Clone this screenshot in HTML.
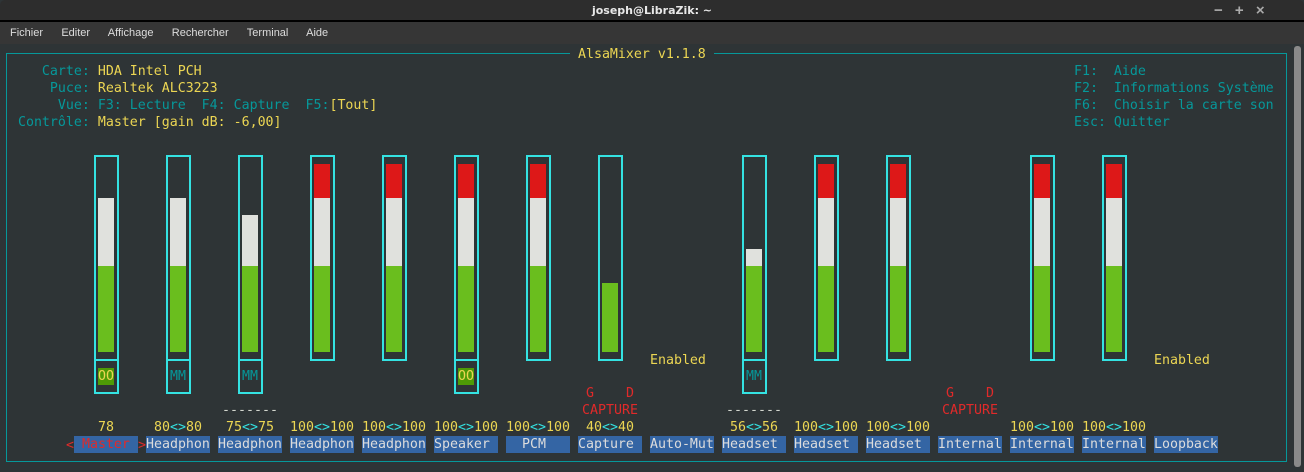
<!DOCTYPE html>
<html><head><meta charset="utf-8"><style>
*{margin:0;padding:0;box-sizing:border-box}
body{width:1304px;height:472px;overflow:hidden;background:#2e3436;position:relative;font-family:"DejaVu Sans Mono","Liberation Mono",monospace}
.t{position:absolute;white-space:pre;font-size:13.28px;line-height:17px;height:17px;margin-top:1px}
.c{color:#06989a}.y{color:#ecd653}.r{color:#e02a2a}.w{color:#d3d7cf}
.box{position:absolute;border:2px solid #34e2e2}
.f{position:absolute}
.lab{position:absolute;top:436px;height:17px;width:64px;background:#3465a4;color:#dcdcdc;font-size:13.28px;line-height:18px;white-space:pre;text-align:left}
.num{position:absolute;width:64px;text-align:center;font-size:13.28px;line-height:18px;white-space:pre;color:#ecd653}
</style></head><body>
<div style="position:absolute;left:0;top:0;width:1304px;height:20px;background:#2d2d2d;border-radius:5px 5px 0 0"></div>
<div style="position:absolute;left:0;top:20px;width:1304px;height:2px;background:#000"></div>
<div style="position:absolute;left:0;top:22px;width:1304px;height:22px;background:#363636"></div>
<div style="position:absolute;left:0;top:4px;width:1304px;text-align:center;color:#e8e8e8;font:bold 11px 'DejaVu Sans',sans-serif">joseph@LibraZik: ~</div>
<div style="position:absolute;right:0;top:2px;width:90px;color:#aaa;font:bold 15px 'Liberation Sans',sans-serif;word-spacing:8px">− + ×</div>
<div style="position:absolute;left:10px;top:27px;color:#ddd;font:11px 'Liberation Sans',sans-serif;white-space:pre">Fichier      Editer      Affichage      Rechercher      Terminal      Aide</div>
<div style="position:absolute;left:1294px;top:46px;width:7px;height:421px;background:#8a8a8a;border-radius:3px"></div>
<div style="position:absolute;left:6px;top:53px;width:1281px;height:409px;border:1px solid #06989a"></div>
<div class="t y" style="left:570px;top:45px;background:#2e3436"> AlsaMixer v1.1.8 </div>
<div class="t" style="left:2px;top:62px"><span class="c">     Carte: </span><span class="y">HDA Intel PCH</span></div>
<div class="t" style="left:2px;top:79px"><span class="c">      Puce: </span><span class="y">Realtek ALC3223</span></div>
<div class="t" style="left:2px;top:96px"><span class="c">       Vue: F3: Lecture  F4: Capture  F5:</span><span class="y">[Tout]</span></div>
<div class="t" style="left:2px;top:113px"><span class="c">  Contrôle: </span><span class="y">Master [gain dB: -6,00]</span></div>
<div class="t c" style="left:1074px;top:62px">F1:  Aide</div>
<div class="t c" style="left:1074px;top:79px">F2:  Informations Système</div>
<div class="t c" style="left:1074px;top:96px">F6:  Choisir la carte son</div>
<div class="t c" style="left:1074px;top:113px">Esc: Quitter</div>

<div id="mx"></div>
<script>
var ch=[
[94,'Master','78',0,198,0,'OO'],
[166,'Headphon','80<>80',0,198,0,'MM'],
[238,'Headphon','75<>75',0,215,0,'MM','-------'],
[310,'Headphon','100<>100',1,198],
[382,'Headphon','100<>100',1,198],
[454,'Speaker ','100<>100',1,198,0,'OO'],
[526,'  PCM   ','100<>100',1,198],
[598,'Capture ','40<>40',0,0,283,null,null,1],
[670,'Auto-Mut',null,null,null,null,null,null,0,'Enabled'],
[742,'Headset ','56<>56',0,249,0,'MM','-------'],
[814,'Headset ','100<>100',1,198],
[886,'Headset ','100<>100',1,198],
[958,'Internal',null,null,null,null,null,null,1,null,true],
[1030,'Internal','100<>100',1,198],
[1102,'Internal','100<>100',1,198],
[1174,'Loopback',null,null,null,null,null,null,0,'Enabled']
];
var h='';
ch.forEach(function(c){
 var x=c[0];
 if(c[2]!==null){
  h+='<div class="box" style="left:'+x+'px;top:155px;width:25px;height:206px"></div>';
  if(c[3])h+='<div class="f" style="left:'+(x+4)+'px;top:164px;width:16px;height:34px;background:#dd1818"></div>';
  if(c[4])h+='<div class="f" style="left:'+(x+4)+'px;top:'+c[4]+'px;width:16px;height:'+(266-c[4])+'px;background:#e0e1dd"></div>';
  var g=c[5]||266;
  h+='<div class="f" style="left:'+(x+4)+'px;top:'+g+'px;width:16px;height:'+(352-g)+'px;background:#6abe1e"></div>';
  var n=c[2].split('<>');
  h+='<div class="num" style="left:'+(x-20)+'px;top:419px">'+(n.length>1?n[0]+'<span style="color:#34e2e2">&lt;&gt;</span>'+n[1]:n[0])+'</div>';
 }
 if(c[6]){
  h+='<div class="box" style="left:'+x+'px;top:359px;width:25px;height:35px"></div>';
  if(c[6]=='OO')h+='<div class="t" style="left:'+(x+4)+'px;top:367px;width:16px;background:#4e9a06;color:#ecd653">OO</div>';
  else h+='<div class="t" style="left:'+(x+4)+'px;top:367px;color:#06989a">MM</div>';
 }
 if(c[7])h+='<div class="num" style="left:'+(x-20)+'px;top:402px;color:#d3d7cf">'+c[7]+'</div>';
 if(c[8]){h+='<div class="num" style="left:'+(x-20)+'px;top:385px;color:#e02a2a">G    D</div><div class="num" style="left:'+(x-20)+'px;top:402px;color:#e02a2a">CAPTURE</div>';}
 if(c[9])h+='<div class="t y" style="left:'+(x-20)+'px;top:351px">'+c[9]+'</div>';
 if(c[1]=='Master'){
  h+='<div class="lab" style="left:'+(x-20)+'px;color:#e02a2a"> Master </div><div class="t r" style="left:'+(x-28)+'px;top:436px">&lt;</div><div class="t r" style="left:'+(x+44)+'px;top:436px">&gt;</div>';
 } else h+='<div class="lab" style="left:'+(x-20)+'px">'+c[1]+'</div>';
});
document.getElementById('mx').innerHTML=h;
</script>
</body></html>
